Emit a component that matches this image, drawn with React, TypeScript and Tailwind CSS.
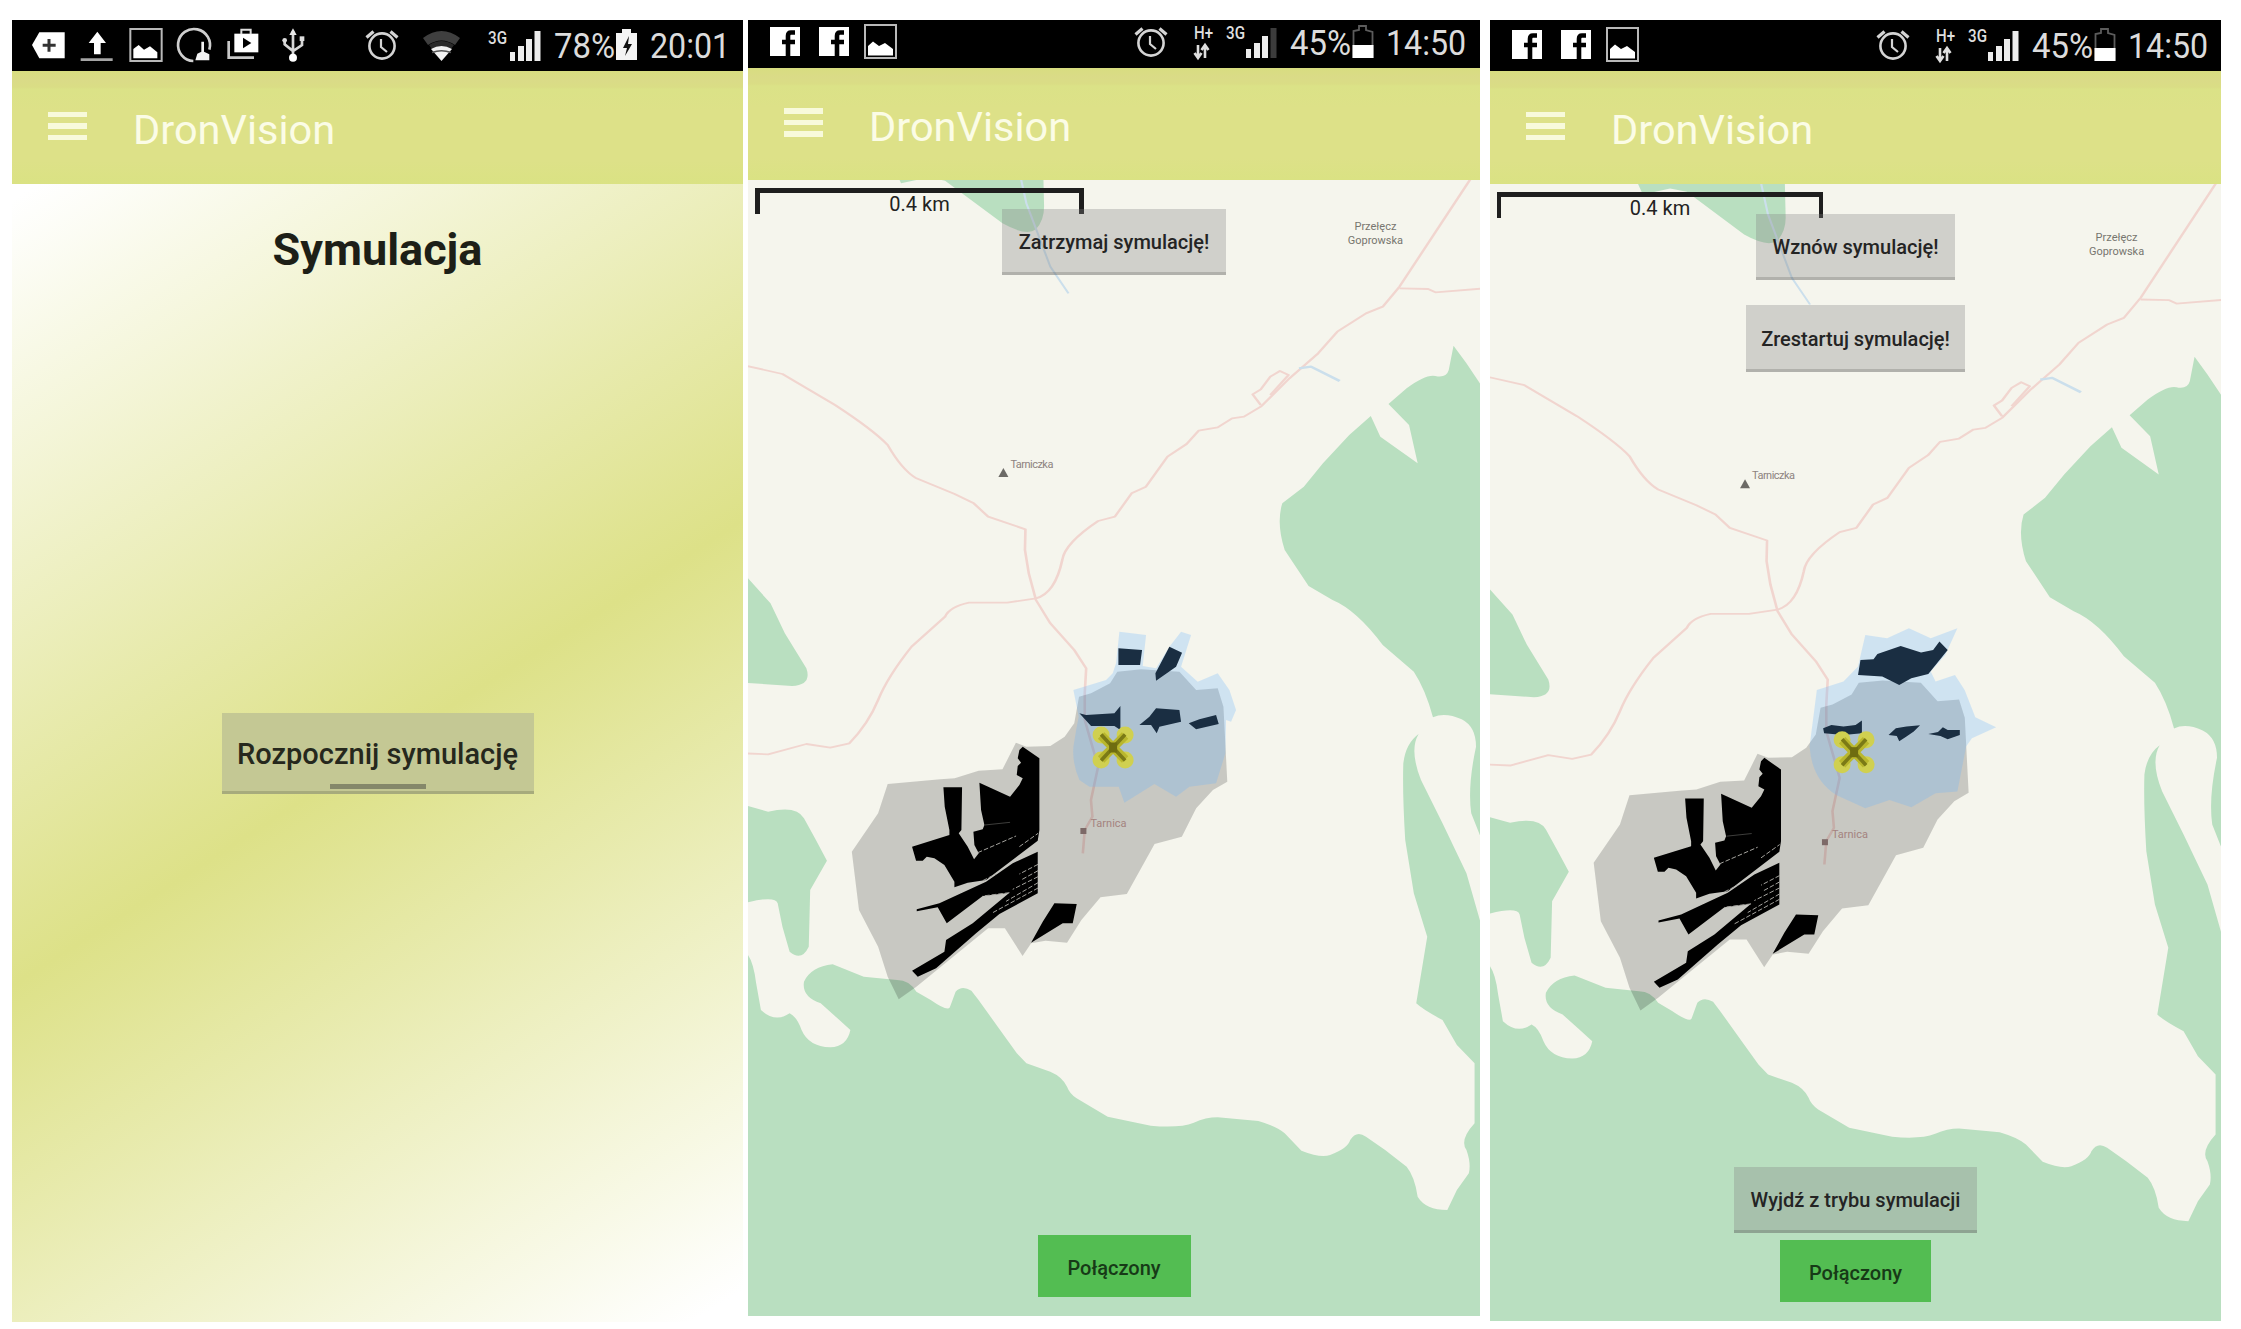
import React from "react";

function AlarmIcon({ x }: { x: number }) {
  return (
    <g transform={`translate(${x} 23)`} fill="none" stroke="#d4d4d4" strokeWidth="2.6">
      <circle cx="0" cy="0" r="12.6" />
      <path d="M-1 -7V1L5 6" strokeWidth="2.2" />
      <path d="M-15.5 -8.5L-8.5 -14.5M15.5 -8.5L8.5 -14.5" strokeWidth="3.2" />
    </g>
  );
}

function SmallLabel({ x, y, children }: { x: number; y: number; children: string }) {
  return (
    <text x={x} y={y} fill="#dedede" fontFamily="Roboto, sans-serif" fontSize="18" fontWeight="500" textLength="19" lengthAdjust="spacingAndGlyphs">
      {children}
    </text>
  );
}

function SignalBars({ x, full }: { x: number; full: boolean }) {
  return (
    <g transform={`translate(${x} 0)`} fill="#ececec">
      <rect x="0" y="29" width="5" height="9" />
      <rect x="8" y="23" width="6" height="15" />
      <rect x="16" y="16" width="6" height="22" />
      <rect x="24.5" y="8" width="6" height="30" fill={full ? "#ececec" : "#3c3c3c"} />
    </g>
  );
}

function PictureIcon() {
  return (
    <g>
      <rect x="361" y="42" width="94" height="96" fill="none" stroke="#b9b9b9" strokeWidth="6" />
      <path d="M370 130V102L386 90L402 104L420 94L442 112V130Z" fill="#fff" />
    </g>
  );
}

/** Notification icons of the first phone. */
function DeviceNotifications() {
  return (
    <svg className="h-12 w-[300px] shrink-0" viewBox="6 24 900 144">
      <path d="M66 90L88 52H164V130H88Z" fill="#fff" />
      <path d="M117 72V110M98 91H137" stroke="#333" strokeWidth="9" />
      <path d="M262 50L288 84H272V118H252V84H236Z" fill="#fff" />
      <path d="M212 134H308" stroke="#a5a5a5" strokeWidth="8" />
      <PictureIcon />
      <path d="M550 138A48 48 0 1 1 598 104" fill="none" stroke="#cfcfcf" strokeWidth="8" />
      <path d="M556 136L562 116L574 110V80H582V110L598 118V136Z" fill="#f4f4f4" />
      <path d="M656 78V128H732" fill="none" stroke="#c8c8c8" strokeWidth="8" />
      <rect x="673" y="56" width="72" height="56" fill="#fff" />
      <path d="M694 58V44H722V58" fill="none" stroke="#ddd" strokeWidth="6" />
      <path d="M699 68L724 84L699 100Z" fill="#000" />
      <path d="M849 48V130M824 74V88L849 108L876 90V70" fill="none" stroke="#d6d6d6" strokeWidth="8" />
      <circle cx="849" cy="128" r="12" fill="#fff" />
      <path d="M849 40L860 60H838Z" fill="#e8e8e8" />
      <circle cx="824" cy="76" r="7" fill="#ddd" />
      <rect x="869" y="64" width="14" height="14" fill="#ddd" />
    </svg>
  );
}

/** Facebook and gallery notifications of the map phones. */
function SocialNotifications() {
  return (
    <svg className="h-12 w-[300px] shrink-0" viewBox="0 0 300 48">
      {[22, 71].map((x) => (
        <g key={x} transform={`translate(${x} 7)`}>
          <rect width="30" height="29" fill="#fff" />
          <path d="M25 5.5H21Q18 5.5 18 9V29M12 15H25" fill="none" stroke="#000" strokeWidth="4.6" />
        </g>
      ))}
      <rect x="117" y="5" width="31" height="33" fill="none" stroke="#b9b9b9" strokeWidth="2" />
      <path d="M120 35.500V26L125 21.500L131 26L137 23L145 29V35.500Z" fill="#fff" />
    </svg>
  );
}

function StatusBar({ kind }: { kind: "charging" | "weak" | "strong" }) {
  const charging = kind === "charging";
  return (
    <div className={`flex shrink-0 items-end bg-black text-[#dcdcdc] ${kind === "weak" ? "h-12" : "h-[51px]"}`}>
      {charging ? <DeviceNotifications /> : <SocialNotifications />}
      {charging ? (
        <svg className="h-12 w-[242px] shrink-0" viewBox="300 0 242 48">
          <AlarmIcon x={370} />
          <path d="M411 15Q429.500 1 448 15L443 22Q429.500 13 416 22Z" fill="#3f3f3f" />
          <path d="M417 22Q429.500 14 442 22L439 26Q429.500 21 420 26Z" fill="#2a2a2a" />
          <path d="M419 26Q429.500 20 440 26L429.500 38Z" fill="#f2f2f2" />
          <path d="M420 29.500Q429.500 26 439 29.500" fill="none" stroke="#555" strokeWidth="1.500" />
          <SmallLabel x={476} y={21}>3G</SmallLabel>
          <SignalBars x={498} full />
        </svg>
      ) : (
        <svg className="h-12 w-[242px] shrink-0" viewBox="300 0 242 48">
          <AlarmIcon x={403} />
          <SmallLabel x={446} y={19}>H+</SmallLabel>
          <path d="M450 25V37M446.500 33L450 38L453.500 33M457 38V26M453.500 30L457 25L460.500 30" fill="none" stroke="#dedede" strokeWidth="2.600" />
          <SmallLabel x={478} y={19}>3G</SmallLabel>
          <SignalBars x={498} full={kind === "strong"} />
        </svg>
      )}
      <span className="h-12 w-[62px] shrink-0 origin-left scale-x-[0.94] whitespace-nowrap text-[35px] leading-[48px]">
        {charging ? "78%" : "45%"}
      </span>
      <svg className="h-12 w-6 shrink-0" viewBox="0 0 24 48">
        {charging ? (
          <>
            <path d="M0 10H6V6H15V10H21V37H0Z" fill="#f4f4f4" />
            <path d="M13 13L7 25H11L9 33L16 21H12Z" fill="#111" />
          </>
        ) : (
          <>
            <path d="M1.500 37V11L7 10V6H14V10L20.500 12V37Z" fill="none" stroke="#5c5c5c" strokeWidth="1.800" />
            <rect x="0.500" y="25" width="21" height="13" fill="#fff" />
          </>
        )}
      </svg>
      <span className="ml-[10px] h-12 w-20 shrink-0 origin-left scale-x-[0.92] whitespace-nowrap text-[35px] leading-[48px]">
        {charging ? "20:01" : "14:50"}
      </span>
    </div>
  );
}

function AppBar({ className }: { className: string }) {
  return (
    <div className={`flex shrink-0 items-center bg-[linear-gradient(#d8dd80_0,#dadb87_9px,#dadd85_16px,#dbe287_18px,#dde188_40px,#dde188_90px,#dae283_100%)] pl-9 ${className}`}>
      <div className="flex w-[39px] flex-col gap-[6px] pb-[3px]">
        <span className="h-[5.500px] bg-[#f8fadb]" />
        <span className="h-[5.500px] bg-[#f8fadb]" />
        <span className="h-[5.500px] bg-[#f8fadb]" />
      </div>
      <span className="ml-[46px] pt-[5px] text-[41.500px] leading-none text-[#fbfce6]">DronVision</span>
    </div>
  );
}

function MapButton({ className, children }: { className: string; children: string }) {
  return (
    <button className={`flex shrink-0 items-center justify-center whitespace-nowrap border-b-[3px] border-black/15 bg-[#82828252] pt-[3px] text-[20px] font-medium text-[#242424] ${className}`}>
      {children}
    </button>
  );
}

function Connected({ className }: { className: string }) {
  return (
    <div className={`flex h-[62px] shrink-0 items-center justify-center bg-[#53bd52] pt-1 text-[20px] font-medium text-[#173a17] ${className}`}>
      Połączony
    </div>
  );
}

function Terrain() {
  return (
    <g transform="translate(740 600) scale(.47832 .33333)">
      <g fill="#b9dfc0">
        <path d="M322 -1300L338 -1250L395 -1268L430 -1258L550 -1130Q600 -1090 620 -1112Q637 -1140 637 -1180L635 -1300Z" />
        <path d="M1560 -630L1548 -650L1520 -710L1493 -763L1483 -690Q1478 -665 1455 -672Q1435 -678 1395 -635L1357 -588L1400 -525L1418 -410L1340 -490L1320 -552L1275 -495L1220 -410L1180 -340L1135 -290Q1122 -230 1140 -150L1190 -42L1240 0Q1290 30 1345 135L1410 215Q1435 270 1450 352Q1475 335 1510 358Q1540 380 1540 440Q1522 560 1530 640L1548 705H1560Z" />
        <path d="M10 -85L18 -65L65 10L95 100L140 205Q152 255 110 258L10 248Z" />
        <path d="M10 615L60 635Q120 615 135 655L160 720L183 782L148 870L145 1040Q130 1085 105 1055L90 980L80 910Q75 885 10 910Z" />
        <path d="M10 1040L18 1065Q30 1090 35 1150L45 1230Q75 1270 105 1240Q120 1250 130 1290Q145 1340 190 1342Q225 1340 232 1290L205 1255L170 1210Q130 1190 135 1145Q150 1100 195 1093L260 1130L330 1140Q355 1140 370 1175L400 1200Q435 1235 440 1222L452 1175Q465 1155 485 1172L500 1200L545 1290L580 1360L600 1390L650 1415Q675 1430 685 1460Q690 1480 705 1495L770 1550L860 1577Q920 1585 950 1568Q975 1552 1000 1552L1085 1563Q1125 1580 1140 1600L1175 1652Q1215 1675 1235 1665Q1272 1645 1277 1620Q1290 1590 1310 1610L1350 1650L1395 1700Q1412 1730 1418 1790Q1435 1830 1480 1830L1500 1770L1525 1720Q1530 1690 1520 1650Q1505 1620 1537 1570V1390L1500 1335L1470 1260Q1430 1230 1415 1210L1438 1010L1410 880L1392 720Q1386 580 1388 490Q1393 430 1420 402Q1400 450 1425 540L1470 670L1520 820L1548 960L1560 1010V2200H10Z" />
      </g>
      <g fill="none" strokeLinejoin="round">
        <g stroke="#f1d5cf" strokeWidth="5.500">
          <path d="M1545 -1300L1527 -1260L1380 -940L1345 -880L1310 -860L1250 -805L1210 -740L1150 -665L1090 -580L1055 -550L1030 -545L1000 -518L960 -508L935 -468L895 -430L850 -340L820 -320L785 -250L750 -237Q680 -170 675 -120Q660 -20 620 -5L560 8L480 8Q440 20 430 50L360 140Q310 230 290 300Q270 370 230 430L190 443L140 432L60 463L10 460" />
          <path d="M10 -704L90 -678L200 -585Q280 -510 310 -465Q340 -390 370 -365L450 -318L490 -290L520 -250L598 -212L597 -150L605 -80L620 0L650 70L700 150L725 205L722 280V360L750 500L735 600L738 650L722 690L718 760" />
          <path d="M1380 -935L1440 -933L1455 -923L1560 -935M1090 -585L1073 -617L1090 -632L1110 -670L1130 -687L1148 -675L1110 -615" />
        </g>
        <g stroke="#cbdfec" strokeWidth="4.500">
          <path d="M583 -1300L600 -1190L650 -1000L688 -920" />
          <path d="M1170 -695L1195 -700L1255 -657" strokeWidth="7" />
        </g>
      </g>
    </g>
  );
}

function Labels() {
  return (
    <g fontFamily="Roboto, sans-serif" fontSize="11" fill="#8d837f">
      <g textAnchor="middle" fill="#77756f">
        <text x="1376" y="230">Przełęcz</text>
        <text x="1376" y="244">Goprowska</text>
      </g>
      <path d="M999 477L1004 468L1009 477Z" fill="#6c6a66" />
      <text x="1011" y="468" textLength="43">Tarniczka</text>
      <rect x="1081" y="828" width="6" height="6" fill="#7d6a68" />
      <text x="1091" y="827" fill="#a4837f">Tarnica</text>
    </g>
  );
}

function ScannedArea() {
  return (
    <>
      <path
        transform="translate(740 600) scale(.47832 .33333)"
        fill="#000"
        fillOpacity=".18"
        d="M310 552L420 538L450 535L500 512L550 508L578 428L600 440L650 438L680 410L700 370L710 290L735 280L775 250L790 215L840 208L920 215L955 270L1000 265L1012 320L1020 545L990 570L955 625L925 710L868 732L810 882L755 892L715 960L685 1028L640 1022L610 1030L592 1068L555 985L520 985L370 1160L333 1198L310 1130L290 1040L250 930L235 755L290 640Z"
      />
      <g transform="translate(840 730) scale(.33333)">
        <path d="M312 172H368L366 300L358 310L385 350L404 388L418 370L405 345L402 305L430 298L435 285L425 240L420 158L512 200L540 165L550 145L532 135L535 108L545 98L535 85L540 60L550 50L600 85V300L595 332L440 450L385 458L345 472V455L315 405L285 385L262 380L250 392H230L218 350L330 315V300L316 230Z" />
        <path d="M595 365V490L480 552L410 610L290 715L235 740L218 722L315 665L320 630L400 580L510 488L430 498L322 580L295 532L232 544V538L300 520L440 455L520 400Z" />
        <path d="M645 520L712 522L700 580H670L575 638L610 575Z" />
        <g fill="none" stroke="#a5a49f" strokeWidth="3" strokeDasharray="14 6">
          <path d="M415 368L530 318M540 350L596 310M430 452L470 432" />
          <path d="M596 403L540 432M596 422L545 450M596 440L520 478M596 458L500 514M596 474L460 548M510 488L430 498" />
        </g>
        <path d="M436 285L512 277" stroke="#5d5d5a" strokeWidth="2" />
      </g>
    </>
  );
}

function Drone({ x, y }: { x: number; y: number }) {
  return (
    <g transform={`translate(${x} ${y})`}>
      <g fill="#d0d050">
        <circle cx="-12" cy="-12.500" r="8.500" />
        <circle cx="12" cy="-12.500" r="8.500" />
        <circle cx="-12" cy="12.500" r="8.500" />
        <circle cx="12" cy="12.500" r="8.500" />
      </g>
      <path d="M-12 -12L12 12M12 -12L-12 12" stroke="#b9b72e" strokeWidth="9" />
      <path d="M-12 -13L12 13M12 -13L-12 13" stroke="#7b7a16" strokeWidth="3.600" />
      <rect x="-4" y="-5" width="8" height="10" fill="#6e6c10" />
    </g>
  );
}

function RunningView() {
  return (
    <>
      <g transform="translate(1000 620) scale(.33333)">
        <path d="M357 85L428 90L422 135H357ZM510 80L548 98L530 140L470 182L468 160ZM240 280L260 285L345 280L363 258V330L345 318H275ZM420 315L450 290L470 265L540 270L545 305L480 320L472 340L455 315ZM568 310L600 298L650 285L658 312L590 328Z" />
        <path fill="#63b0ff" fillOpacity=".26" d="M360 35L440 45L430 138L470 145L510 80L545 35L575 45L545 140L595 185L655 160L690 210L710 270L695 305L680 300L678 400L650 490L570 500L530 530L465 492L375 548L358 500H270L240 480Q218 430 222 380L232 320L238 290L222 210L320 180L340 160L350 130Z" />
      </g>
      <Drone x={1113.7} y={747.5} />
    </>
  );
}

function PausedView() {
  return (
    <>
      <g transform="translate(738.6 588.7) scale(.4853 .33333)">
        <path d="M785 180L812 178L820 162L868 138L910 158L935 150L948 125L965 150L925 222L890 235L865 255L830 230L780 225ZM708 385L725 375L750 380L775 375L788 362V400L750 405L710 400ZM843 405L858 385L880 380L908 376L895 395L880 410L865 424L860 408ZM925 402L945 396L955 382L965 390L990 390V405L965 418L950 408Z" />
        <path fill="#63b0ff" fillOpacity=".26" d="M795 105L840 115L885 85L930 115L985 85L960 165L930 215L940 245L980 225L1000 270L1022 352L1065 382L1015 415L1003 440L985 575L940 580L890 622L845 600L795 625L735 585Q685 540 680 440L695 270L750 245L780 200Z" />
      </g>
      <Drone x={1113.2} y={741} />
    </>
  );
}

function ScaleBar({ className }: { className: string }) {
  return (
    <div className={`absolute left-[7px] flex h-[26px] justify-center border-[#1e1e1e] text-[20px] leading-[22px] text-[#222] ${className}`}>
      0.4 km
    </div>
  );
}

function MapPhone({ paused }: { paused: boolean }) {
  return (
    <section className={`flex shrink-0 flex-col ${paused ? "h-[1301px] w-[731px]" : "h-[1296px] w-[732px]"}`}>
      <StatusBar kind={paused ? "strong" : "weak"} />
      <AppBar className={paused ? "h-[113px]" : "h-[112px]"} />
      <div className="relative min-h-0 flex-1 bg-[#f5f5ed]">
        <svg className="block h-full w-full" viewBox={paused ? "748.6 172.8 732 1137" : "748.6 180 732 1136"} preserveAspectRatio="none">
          <Terrain />
          <ScannedArea />
          <Labels />
          {paused ? <PausedView /> : <RunningView />}
        </svg>
        <ScaleBar className={paused ? "top-2 w-[326px] border-x-4 border-t-[5px]" : "top-2 w-[329px] border-x-[5px] border-t-[5px]"} />
        {paused ? (
          <div className="absolute inset-0 flex flex-col items-center pt-[30px] pb-[19px]">
            <MapButton className="h-[66px] w-[199px]">Wznów symulację!</MapButton>
            <MapButton className="mt-[25px] h-[67px] w-[219px]">Zrestartuj symulację!</MapButton>
            <MapButton className="mt-auto h-[66px] w-[243px]">Wyjdź z trybu symulacji</MapButton>
            <Connected className="mt-[7px] w-[151px]" />
          </div>
        ) : (
          <div className="absolute inset-0 flex flex-col items-center justify-between pt-[29px] pb-[19px]">
            <MapButton className="h-[66px] w-[224px]">Zatrzymaj symulację!</MapButton>
            <Connected className="w-[153px]" />
          </div>
        )}
      </div>
    </section>
  );
}

function StartPhone() {
  return (
    <section className="flex h-[1302px] w-[731px] shrink-0 flex-col">
      <StatusBar kind="charging" />
      <AppBar className="h-[113px]" />
      <div className="flex flex-1 flex-col items-center bg-[linear-gradient(147.500deg,#fff_1%,#dde188_50%,#fff_98%)]">
        <h1 className="mt-[39px] text-[45px] leading-[54px] font-bold text-[#1d1f17]">Symulacja</h1>
        <button className="mt-[436px] flex h-[81px] w-[312px] flex-col items-center border-b-[3px] border-[#a7ab7c] bg-[#c4c894] pt-[22px] text-[29px] leading-[38px] font-medium whitespace-nowrap text-[#26281d]">
          Rozpocznij symulację
          <span className="mt-[11px] h-[5px] w-24 shrink-0 bg-[#85886a]" />
        </button>
      </div>
    </section>
  );
}

export default function App() {
  return (
    <main className="flex h-[1329px] w-[2241px] items-start overflow-hidden bg-white pt-5 pl-3 font-[Roboto,sans-serif]">
      <StartPhone />
      <div className="ml-[5px] flex items-start gap-[10px]">
        <MapPhone paused={false} />
        <MapPhone paused />
      </div>
    </main>
  );
}
